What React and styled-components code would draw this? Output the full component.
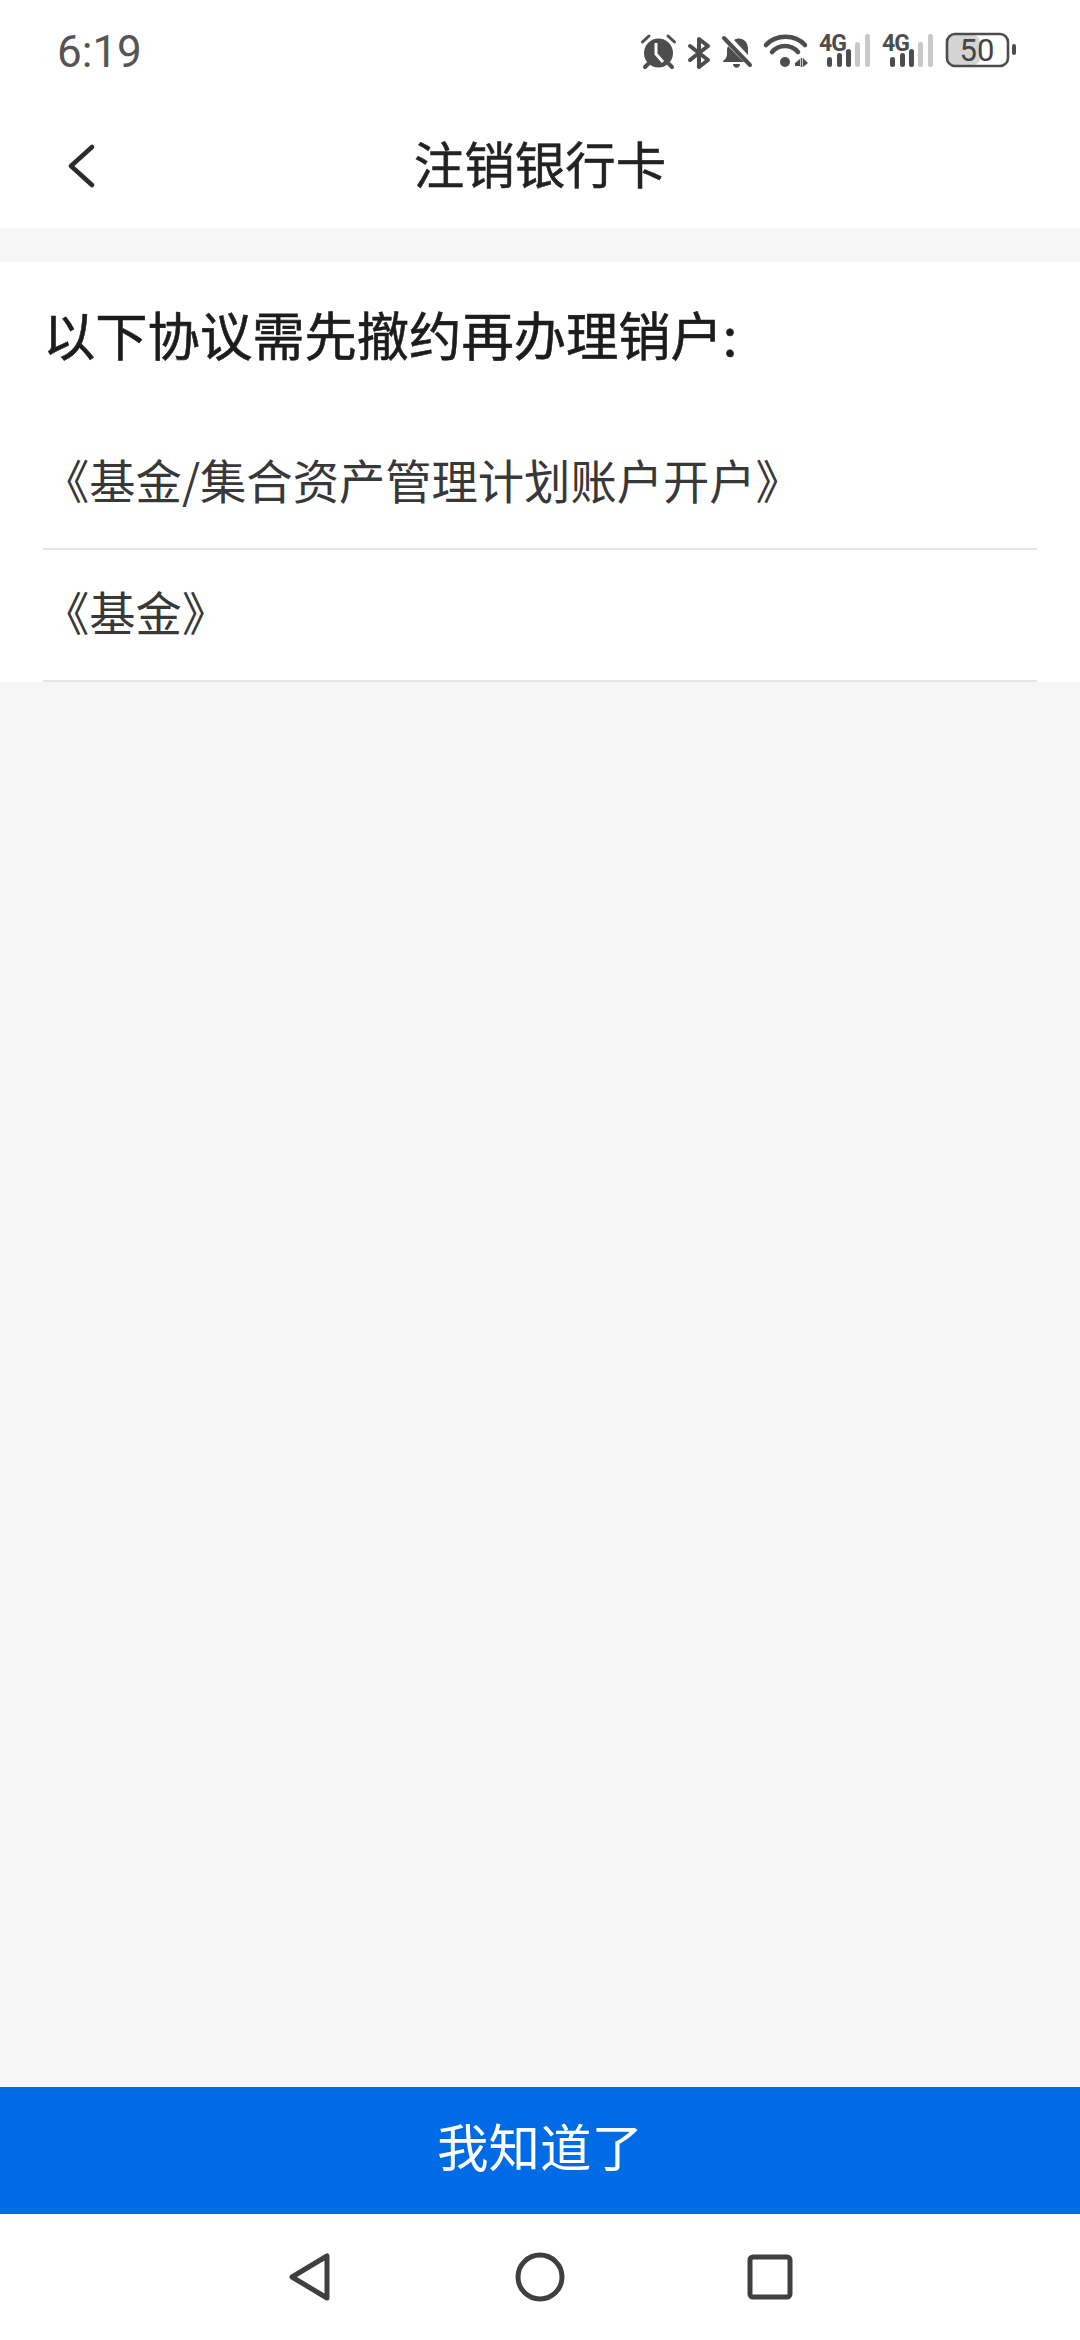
import React from 'react'
import styled, { createGlobalStyle } from 'styled-components'

const GlobalStyle = createGlobalStyle`
  html, body {
    margin: 0;
    padding: 0;
    background: #f6f6f6;
  }
  * {
    box-sizing: border-box;
  }
`

const CJK = `"Noto Sans CJK SC", "Noto Sans", sans-serif`

const Page = styled.div`
  width: 1080px;
  height: 2340px;
  display: flex;
  flex-direction: column;
  background: #f6f6f6;
  font-family: ${CJK};
`

const StatusBar = styled.div`
  height: 84px;
  padding: 32px 63px 0 57px;
  display: flex;
  justify-content: space-between;
  align-items: flex-start;
  background: #fff;
  color: #4d4d4d;
`

const Clock = styled.div`
  font-family: Roboto, sans-serif;
  font-size: 44px;
  line-height: 40px;
  color: #555;
`

const StatusIcons = styled.div`
  display: flex;
  gap: 12px;
  align-items: flex-start;
`

const Header = styled.header`
  height: 144px;
  padding: 12px 0 0 0;
  display: grid;
  grid-template-columns: 1fr auto 1fr;
  align-items: center;
  background: #fff;
`

const BackButton = styled.div`
  padding: 8px 0 0 66px;
  display: flex;
  align-items: center;
`

const Title = styled.h1`
  margin: 0;
  font-size: 50.5px;
  font-weight: 400;
  line-height: 60px;
  color: #222;
  -webkit-text-stroke: 0.5px #222;
`

const Card = styled.section`
  margin-top: 34px;
  background: #fff;
`

const Heading = styled.h2`
  margin: 0;
  height: 156px;
  padding: 0 0 15px 43px;
  display: flex;
  align-items: center;
  font-size: 52.3px;
  font-weight: 400;
  color: #1c1c1c;
  -webkit-text-stroke: 0.6px #1c1c1c;
`

const AgreementList = styled.div`
  padding: 0 43px;
`

const Agreement = styled.div`
  height: 132px;
  display: flex;
  align-items: center;
  padding-bottom: 9px;
  border-bottom: 2px solid #e4e4e4;
  font-size: 46.3px;
  color: #383838;
`

const Spacer = styled.div`
  flex: 1;
`

const ConfirmButton = styled.div`
  height: 127px;
  padding-bottom: 12px;
  display: flex;
  align-items: center;
  justify-content: center;
  background: #006be6;
  font-size: 51.5px;
  color: #fff;
`

const NavBar = styled.nav`
  height: 126px;
  display: grid;
  grid-template-columns: repeat(3, 230px);
  justify-content: center;
  justify-items: center;
  align-items: center;
  background: #fff;
`

const NavIcon = styled.svg`
  display: block;
  fill: none;
  stroke: #3f3f3f;
  stroke-width: 5;
  stroke-linejoin: round;
`

const StatusIcon = styled.svg`
  display: block;
  margin-top: ${p => p.$top || 0}px;
  fill: currentColor;
  overflow: visible;
`

const SmallLabel = styled.text`
  font-family: Roboto, sans-serif;
  font-size: 23px;
  font-weight: 700;
  letter-spacing: -1px;
  fill: #4d4d4d;
`

const BatteryLabel = styled.text`
  font-family: Roboto, sans-serif;
  font-size: 31px;
  fill: #444;
`

function AlarmIcon() {
  return (
    <StatusIcon $top={2} width="35" height="36" viewBox="0 0 35 36">
      <circle cx="17.5" cy="19" r="14.5" />
      <path d="M1.5 8 L8 2 M33.5 8 L27 2" stroke="currentColor" strokeWidth="3" strokeLinecap="round" fill="none" />
      <path d="M7 30 L4 33 M28 30 L31 33" stroke="currentColor" strokeWidth="4" strokeLinecap="round" fill="none" />
      <path d="M15 9 V20 L22 28" stroke="#fff" strokeWidth="3" fill="none" />
    </StatusIcon>
  )
}

function BluetoothIcon() {
  return (
    <StatusIcon $top={6} width="22" height="30" viewBox="0 0 22 30">
      <path
        d="M2 8 L20 22 L11 29 V1 L20 8 L2 22"
        fill="none"
        stroke="currentColor"
        strokeWidth="4"
        strokeLinejoin="round"
        strokeLinecap="round"
      />
    </StatusIcon>
  )
}

function BellOffIcon() {
  return (
    <StatusIcon $top={5} width="30" height="31" viewBox="0 0 30 31">
      <path d="M12 3 C18 -1 26 3 26 12 V18 L12 3 Z" />
      <path d="M6 9 L22 25 H1 C1 23 5 22 5 17 V12 Z" />
      <path d="M11 27 H18 C18 32 11 32 11 27 Z" />
      <path d="M2 1 L28 28" stroke="currentColor" strokeWidth="4" strokeLinecap="round" />
    </StatusIcon>
  )
}

function WifiIcon() {
  return (
    <StatusIcon $top={1} width="43" height="36" viewBox="0 0 43 36">
      <path d="M2 12 C12 1 31 1 41 12" fill="none" stroke="currentColor" strokeWidth="4.5" strokeLinecap="round" />
      <path d="M8 19 C15 11 27 11 34 19" fill="none" stroke="currentColor" strokeWidth="4.5" strokeLinecap="round" />
      <circle cx="21" cy="29" r="5" />
      <path d="M31 30 L36 26 V33 H31 Z M39 25 V34 L44 30 Z" />
      <path d="M37.5 25 V34" stroke="currentColor" strokeWidth="1.6" />
    </StatusIcon>
  )
}

const signalBars = [
  { x: 8, y: 23, h: 10, on: true },
  { x: 18, y: 19, h: 14, on: true },
  { x: 27, y: 15, h: 18, on: true },
  { x: 36, y: 8, h: 25, on: false },
  { x: 46, y: 0, h: 33, on: false },
]

function SignalIcon() {
  return (
    <StatusIcon $top={2} width="51" height="36" viewBox="0 0 51 36">
      <SmallLabel x="0" y="17">4G</SmallLabel>
      {signalBars.map(b => (
        <rect key={b.x} x={b.x} y={b.y} width="5" height={b.h} rx="2.5" fill={b.on ? '#4d4d4d' : '#c8c8c8'} />
      ))}
    </StatusIcon>
  )
}

function BatteryIcon() {
  return (
    <StatusIcon width="72" height="36" viewBox="0 0 72 36">
      <rect x="3" y="3" width="32" height="30" rx="7" fill="#d4d4d4" />
      <rect x="2" y="2" width="61" height="32" rx="8" fill="none" stroke="#4d4d4d" strokeWidth="2.6" />
      <rect x="67" y="12" width="4" height="11" rx="2" />
      <BatteryLabel x="32" y="29" textAnchor="middle">50</BatteryLabel>
    </StatusIcon>
  )
}

function App() {
  return (
    <>
      <GlobalStyle />
      <Page>
        <StatusBar>
          <Clock>6:19</Clock>
          <StatusIcons>
            <AlarmIcon />
            <BluetoothIcon />
            <BellOffIcon />
            <WifiIcon />
            <SignalIcon />
            <SignalIcon />
            <BatteryIcon />
          </StatusIcons>
        </StatusBar>
        <Header>
          <BackButton>
            <svg width="30" height="44" viewBox="0 0 30 44" fill="none" stroke="#2b2b2b" strokeWidth="4.5" strokeLinecap="round" strokeLinejoin="round">
              <path d="M26 3 L5 22 L26 41" />
            </svg>
          </BackButton>
          <Title>注销银行卡</Title>
        </Header>
        <Card>
          <Heading>以下协议需先撤约再办理销户:</Heading>
          <AgreementList>
            <Agreement>《基金/集合资产管理计划账户开户》</Agreement>
            <Agreement>《基金》</Agreement>
          </AgreementList>
        </Card>
        <Spacer />
        <ConfirmButton>我知道了</ConfirmButton>
        <NavBar>
          <NavIcon width="42" height="48" viewBox="0 0 42 48">
            <path d="M3 24 L38 3 V45 Z" />
          </NavIcon>
          <NavIcon width="50" height="50" viewBox="0 0 50 50">
            <circle cx="25" cy="25" r="22" />
          </NavIcon>
          <NavIcon width="46" height="46" viewBox="0 0 46 46">
            <rect x="3" y="3" width="40" height="40" rx="3" />
          </NavIcon>
        </NavBar>
      </Page>
    </>
  )
}

export default App
